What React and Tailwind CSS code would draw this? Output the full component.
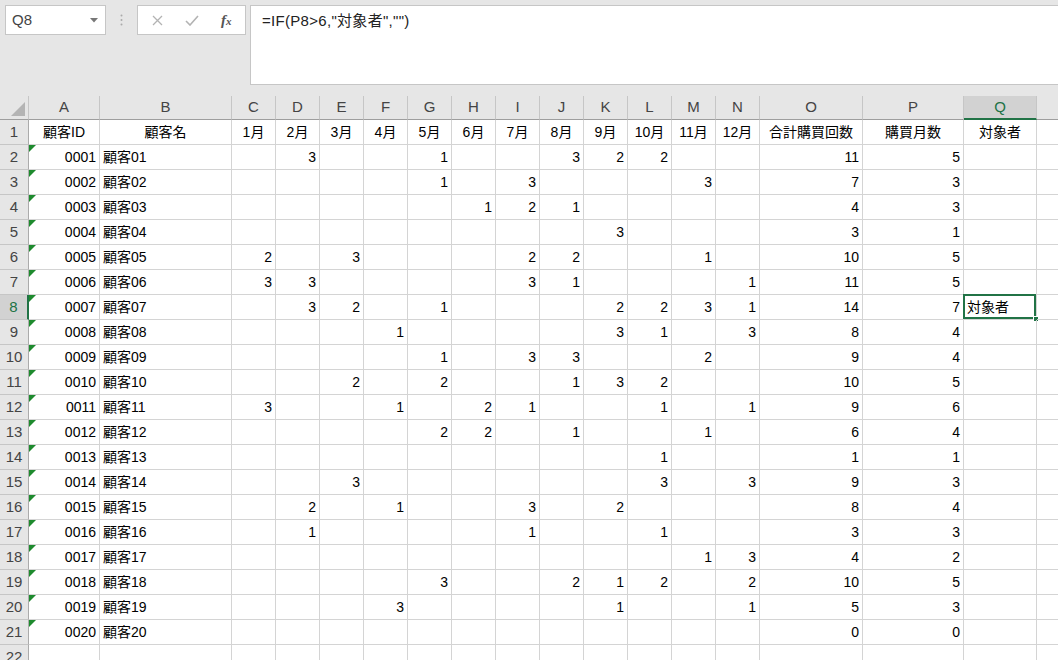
import React from "react";

const COLS = ["A", "B", "C", "D", "E", "F", "G", "H", "I", "J", "K", "L", "M", "N", "O", "P", "Q", "R"];
const WIDTHS = ["w-[71px]", "w-[132px]", ...Array(12).fill("w-[44px]"), "w-[103px]", "w-[101px]", "w-[73px]", "w-[100px]"];
const HEAD = ["顧客ID", "顧客名", "1月", "2月", "3月", "4月", "5月", "6月", "7月", "8月", "9月", "10月", "11月", "12月", "合計購買回数", "購買月数", "対象者", ""];

// month values by column index 0..11, then total, months
const DATA = [
  [{ 1: 3, 4: 1, 7: 3, 8: 2, 9: 2 }, 11, 5],
  [{ 4: 1, 6: 3, 10: 3 }, 7, 3],
  [{ 5: 1, 6: 2, 7: 1 }, 4, 3],
  [{ 8: 3 }, 3, 1],
  [{ 0: 2, 2: 3, 6: 2, 7: 2, 10: 1 }, 10, 5],
  [{ 0: 3, 1: 3, 6: 3, 7: 1, 11: 1 }, 11, 5],
  [{ 1: 3, 2: 2, 4: 1, 8: 2, 9: 2, 10: 3, 11: 1 }, 14, 7],
  [{ 3: 1, 8: 3, 9: 1, 11: 3 }, 8, 4],
  [{ 4: 1, 6: 3, 7: 3, 10: 2 }, 9, 4],
  [{ 2: 2, 4: 2, 7: 1, 8: 3, 9: 2 }, 10, 5],
  [{ 0: 3, 3: 1, 5: 2, 6: 1, 9: 1, 11: 1 }, 9, 6],
  [{ 4: 2, 5: 2, 7: 1, 10: 1 }, 6, 4],
  [{ 9: 1 }, 1, 1],
  [{ 2: 3, 9: 3, 11: 3 }, 9, 3],
  [{ 1: 2, 3: 1, 6: 3, 8: 2 }, 8, 4],
  [{ 1: 1, 6: 1, 9: 1 }, 3, 3],
  [{ 10: 1, 11: 3 }, 4, 2],
  [{ 4: 3, 7: 2, 8: 1, 9: 2, 11: 2 }, 10, 5],
  [{ 3: 3, 8: 1, 11: 1 }, 5, 3],
  [{}, 0, 0],
];

const font = { fontFamily: '"Liberation Sans", "Noto Sans CJK JP", sans-serif' };

function RowHeader({ n, selected }) {
  return (
    <div
      className={`w-[29px] shrink-0 h-full flex items-center justify-center text-[15px] border-r border-b ${
        selected
          ? "bg-[#d2d2d2] text-[#217346] border-r-2 border-r-[#217346] border-b-[#c6c6c6]"
          : "bg-[#e6e6e6] text-[#444] border-r-[#ababab] border-b-[#c6c6c6]"
      }`}
    >
      {n}
    </div>
  );
}

function Cell({ i, children, align = "right", extra = "" }) {
  const al = align === "right" ? "justify-end pr-[3px]" : align === "center" ? "justify-center" : "justify-start pl-[3px]";
  return (
    <div className={`${WIDTHS[i]} shrink-0 h-full relative flex items-center ${al} border-r border-b border-[#d4d4d4] text-[14px] text-black whitespace-nowrap ${extra}`}>
      {children}
    </div>
  );
}

export default function App() {
  return (
    <div className="w-[1058px] h-[660px] overflow-hidden bg-white" style={font}>
      {/* formula bar */}
      <div className="h-[96px] bg-[#e6e6e6] flex items-start pt-[5px] pl-[5px]">
        <div className="w-[101px] h-[30px] bg-white border border-[#c6c6c6] flex items-center justify-between pl-[6px] pr-[7px] text-[15px] text-[#444]">
          <span>Q8</span>
          <svg width="8" height="5" viewBox="0 0 8 5"><path d="M0 0h8L4 4.5z" fill="#777" /></svg>
        </div>
        <div className="w-[31px] h-[30px] flex items-center justify-center">
          <svg width="3" height="12" viewBox="0 0 3 12"><circle cx="1.5" cy="1.5" r="1" fill="#aaa" /><circle cx="1.5" cy="6" r="1" fill="#aaa" /><circle cx="1.5" cy="10.5" r="1" fill="#aaa" /></svg>
        </div>
        <div className="w-[109px] h-[30px] bg-white border border-[#c6c6c6] flex items-center pl-[14px] gap-[22px]">
          <svg width="11" height="11" viewBox="0 0 11 11"><path d="M1 1l9 9M10 1l-9 9" stroke="#b3b3b3" strokeWidth="1.3" /></svg>
          <svg width="14" height="11" viewBox="0 0 14 11"><path d="M1 6l4 4 8-9" stroke="#b3b3b3" strokeWidth="1.6" fill="none" /></svg>
          <span className="text-[15px] text-[#555] italic font-bold leading-none" style={{ fontFamily: '"Liberation Serif", serif' }}>
            f<span className="text-[11px]">x</span>
          </span>
        </div>
        <div className="ml-[4px] flex-1 h-[80px] bg-white border border-[#c6c6c6] border-r-0 pl-[11px] pt-[4px] text-[15px] text-[#222] tracking-[0.3px]">
          =IF(P8&gt;6,"対象者","")
        </div>
      </div>

      {/* column headers */}
      <div className="h-[24px] flex bg-[#e6e6e6]">
        <div className="w-[29px] shrink-0 h-full border-r border-b border-r-[#c6c6c6] border-b-[#9e9e9e] relative">
          <svg className="absolute right-[3px] bottom-[3px]" width="14" height="14" viewBox="0 0 14 14"><path d="M14 0v14H0z" fill="#b4b4b4" /></svg>
        </div>
        {COLS.map((c, i) => (
          <div
            key={c}
            className={`${WIDTHS[i]} shrink-0 h-full flex items-center justify-center text-[15px] border-r border-r-[#c6c6c6] ${
              c === "Q" ? "bg-[#d2d2d2] text-[#217346] border-b-2 border-b-[#217346]" : "text-[#444] border-b border-b-[#9e9e9e]"
            }`}
          >
            {c === "R" ? "" : c}
          </div>
        ))}
      </div>

      {/* row 1 */}
      <div className="h-[25px] flex">
        <RowHeader n={1} />
        {HEAD.map((h, i) => (
          <Cell key={i} i={i} align="center">{h}</Cell>
        ))}
      </div>

      {DATA.map(([m, total, months], r) => {
        const rowNum = r + 2;
        const sel = rowNum === 8;
        return (
          <div key={rowNum} className="h-[25px] flex">
            <RowHeader n={rowNum} selected={sel} />
            <Cell i={0}>
              <svg className="absolute left-0 top-0" width="7" height="7" viewBox="0 0 7 7"><path d="M0 0h7L0 7z" fill="#1e8a2e" /></svg>
              {String(r + 1).padStart(4, "0")}
            </Cell>
            <Cell i={1} align="left">顧客{String(r + 1).padStart(2, "0")}</Cell>
            {Array.from({ length: 12 }).map((_, k) => (
              <Cell key={k} i={k + 2}>{m[k] ?? ""}</Cell>
            ))}
            <Cell i={14}>{total}</Cell>
            <Cell i={15}>{months}</Cell>
            <Cell i={16} align="left">
              {sel && (
                <>
                  <div className="absolute left-[-1px] top-[-1px] right-0 bottom-0 border-2 border-[#217346]" />
                  <div className="absolute right-[-3px] bottom-[-3px] w-[6px] h-[6px] bg-[#217346] border border-white" />
                  <span className="relative">対象者</span>
                </>
              )}
            </Cell>
            <Cell i={17} />
          </div>
        );
      })}

      {/* row 22 */}
      <div className="h-[25px] flex">
        <RowHeader n={22} />
        {COLS.map((c, i) => (
          <Cell key={c} i={i} />
        ))}
      </div>
    </div>
  );
}
